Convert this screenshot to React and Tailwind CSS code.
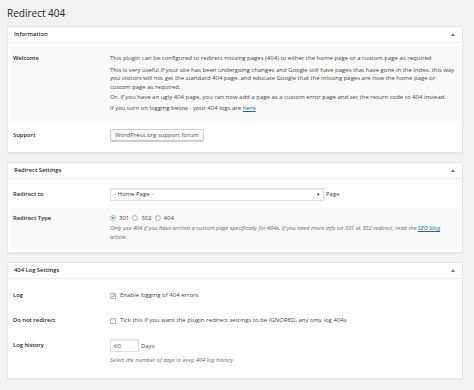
const Arrow = () => (
  <svg width="4" height="3" viewBox="0 0 4 3" className="mr-[1px]">
    <path d="M0 3 L2 0 L4 3 Z" fill="#72777c" />
  </svg>
);

const Panel = ({ title, children }) => (
  <div className="bg-white border border-[#e5e5e5] shadow-[0_1px_1px_rgba(0,0,0,0.04)]">
    <div className="h-[16px] border-b border-[#eee] px-[6px] flex items-center justify-between">
      <span className="font-semibold text-[5.8px] text-[#23282d]">{title}</span>
      <Arrow />
    </div>
    <div className="p-[3px]">{children}</div>
  </div>
);

const Row = ({ label, gray, className = '', children }) => (
  <div className={`flex pl-[2px] ${gray ? 'bg-[#f9f9f9]' : ''} ${className}`}>
    <div className="w-[97px] shrink-0 font-semibold text-[5.8px] text-[#23282d] leading-[9px]">{label}</div>
    <div className="flex-1 min-w-0 leading-[8.7px]">{children}</div>
  </div>
);

const Radio = ({ checked }) => (
  <span className="inline-flex w-[6px] h-[6px] rounded-full border border-[#b4b9be] bg-white items-center justify-center shadow-[inset_0_1px_1px_rgba(0,0,0,0.1)]">
    {checked && <span className="w-[2.5px] h-[2.5px] rounded-full bg-[#1e8cbe]" />}
  </span>
);

const Checkbox = ({ checked }) => (
  <span className="inline-flex w-[6px] h-[6px] border border-[#b4b9be] bg-white items-center justify-center shadow-[inset_0_1px_1px_rgba(0,0,0,0.1)]">
    {checked && (
      <svg width="6" height="6" viewBox="0 0 6 6">
        <path d="M1 3 L2.5 4.6 L5.4 0.8" stroke="#1e8cbe" strokeWidth="1.2" fill="none" />
      </svg>
    )}
  </span>
);

export default function App() {
  return (
    <div className="min-h-[390px] bg-[#f1f1f1] pl-[7px] pr-[11px] pt-[7px] pb-[10px] text-[6px] text-[#444] font-['Open_Sans','Liberation_Sans',sans-serif]">
      <h1 className="text-[10px] leading-[13px] text-[#23282d]">Redirect 404</h1>

      <div className="mt-[6px] flex flex-col gap-[9px]">
        <Panel title="Information">
          <Row label="Welcome" gray className="pt-[8px] pb-[10px]">
            <p className="mb-[3px]">This plugin can be configured to redirect missing pages (404) to either the home page or a custom page as required</p>
            <p className="mb-[1.5px] -mr-[3px] tracking-[-0.02px]">
              This is very useful if your site has been undergoing changes and Google still have pages that have gone in the index, this way you visitors will not get the standard 404 page, and educate Google that the missing pages are now the home page or
              <br />
              custom page as required.
            </p>
            <p className="mb-[1.5px]">Or, if you have an ugly 404 page, you can now add a page as a custom error page and set the return code to 404 instead.</p>
            <p>If you turn on logging below - your 404 logs are <a className="text-[#0073aa] underline">here</a></p>
          </Row>
          <Row label="Support" className="pt-[7px] pb-[8px] items-center">
            <span className="inline-flex items-center h-[12px] px-[4px] bg-[#f7f7f7] border border-[#ccc] rounded-[2px] shadow-[0_1px_0_#ccc] text-[#555]">
              WordPress.org support forum
            </span>
          </Row>
        </Panel>

        <Panel title="Redirect Settings">
          <Row label="Redirect to" className="pt-[6px] pb-[7px] items-center">
            <div className="flex items-center gap-[2px]">
              <div className="w-[214px] h-[13px] border border-[#ddd] bg-white flex items-center justify-between pl-[3px] pr-[3px] shadow-[inset_0_1px_2px_rgba(0,0,0,0.07)] text-[#32373c]">
                <span>- Home Page -</span>
                <span className="text-[5px] text-[#32373c]">▾</span>
              </div>
              <span className="text-[#444]">Page</span>
            </div>
          </Row>
          <Row label="Redirect Type" gray className="pt-[5.5px] pb-[6.5px]">
            <div className="flex items-center gap-[3px] mb-[2px]">
              <Radio checked />
              <span>301</span>
              <Radio />
              <span>302</span>
              <Radio />
              <span>404</span>
            </div>
            <p className="italic text-[5.7px] leading-[9px] text-[#666] pr-[4px]">
              Only use 404 if you have written a custom page specifically for 404s. If you need more info on 301 vs 302 redirect, read the <a className="text-[#0073aa] underline">SEO blog</a> article.
            </p>
          </Row>
        </Panel>

        <Panel title="404 Log Settings">
          <Row label="Log" className="pt-[9.5px] pb-[8px]">
            <div className="flex items-center gap-[4px]">
              <Checkbox checked />
              <span>Enable logging of 404 errors</span>
            </div>
          </Row>
          <Row label="Do not redirect" className="pt-[8px] pb-[8px]">
            <div className="flex items-center gap-[4px]">
              <Checkbox />
              <span>Tick this if you want the plugin redirect settings to be IGNORED, any only log 404s</span>
            </div>
          </Row>
          <Row label="Log history" className="pt-[8px] pb-[10px]">
            <div className="flex items-center gap-[2px] -mt-[2px] mb-[3.5px]">
              <div className="w-[29px] h-[13px] border border-[#ddd] bg-white flex items-center pl-[3px] text-[#32373c] shadow-[inset_0_1px_2px_rgba(0,0,0,0.07)]">60</div>
              <span>Days</span>
            </div>
            <p className="italic text-[5.7px] text-[#666]">Select the number of days to keep 404 log history</p>
          </Row>
        </Panel>
      </div>
    </div>
  );
}
